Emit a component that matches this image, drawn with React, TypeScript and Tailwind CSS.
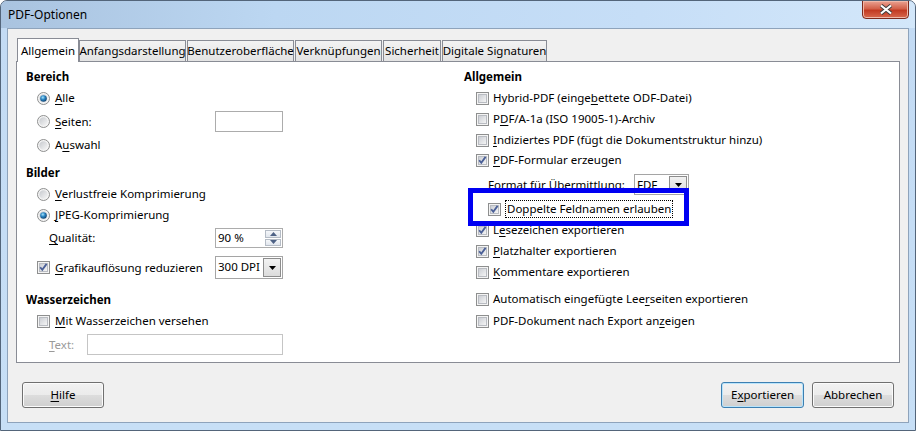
import React from "react";

function Check({ checked }: { checked?: boolean }) {
  return (
    <svg width="13" height="13" viewBox="0 0 13 13" className="shrink-0">
      <defs>
        <linearGradient id="cbg" x1="0" y1="0" x2="1" y2="1">
          <stop offset="0" stopColor="#c9ccd2" />
          <stop offset="1" stopColor="#f7f7f7" />
        </linearGradient>
      </defs>
      <rect x="0.5" y="0.5" width="12" height="12" fill="#f4f4f4" stroke="#8e8f8f" />
      <rect x="2.5" y="2.5" width="8" height="8" fill="url(#cbg)" stroke="#b9bcc2" />
      {checked && (
        <path d="M3.2 6.2 L5.3 8.8 L9.6 2.9" stroke="#4a5f97" strokeWidth="1.8" fill="none" />
      )}
    </svg>
  );
}

function Radio({ checked }: { checked?: boolean }) {
  return (
    <svg width="13" height="13" viewBox="0 0 13 13" className="shrink-0">
      <defs>
        <linearGradient id="rbg" x1="0" y1="0" x2="1" y2="1">
          <stop offset="0" stopColor="#c6c9ce" />
          <stop offset="1" stopColor="#f7f7f7" />
        </linearGradient>
        <radialGradient id="rdot" cx="0.4" cy="0.35" r="0.7">
          <stop offset="0" stopColor="#a8e4fb" />
          <stop offset="0.45" stopColor="#2b86c4" />
          <stop offset="1" stopColor="#0d3a66" />
        </radialGradient>
      </defs>
      <circle cx="6.5" cy="6.5" r="6" fill="#f4f4f4" stroke="#8e8f8f" />
      <circle cx="6.5" cy="6.5" r="4.2" fill="url(#rbg)" />
      {checked && <circle cx="6.5" cy="6.5" r="3.3" fill="url(#rdot)" />}
    </svg>
  );
}

function U({ children }: { children: React.ReactNode }) {
  return <span className="underline underline-offset-[2px]">{children}</span>;
}

function Arrow() {
  return (
    <svg width="7" height="4" viewBox="0 0 7 4">
      <path d="M0 0 H7 L3.5 4 Z" fill="#000" />
    </svg>
  );
}

function Combo({ value, w }: { value: string; w: string }) {
  return (
    <div className={`${w} h-full flex border border-[#a5a5a5] bg-white`}>
      <span className="flex-1 pl-[2px] leading-[20px] whitespace-nowrap">{value}</span>
      <span className="w-[18px] m-px flex items-center justify-center border border-[#8d8d8d] bg-[linear-gradient(#f2f2f2,#dcdcdc)]">
        <Arrow />
      </span>
    </div>
  );
}

function Btn({ children, w, primary }: { children: React.ReactNode; w: string; primary?: boolean }) {
  return (
    <div
      className={`${w} h-[26px] flex items-center justify-center rounded-[3px] border ${
        primary
          ? "border-[#3c7fb1] shadow-[inset_0_0_0_1px_#b9e4fb]"
          : "border-[#707070] shadow-[inset_0_0_0_1px_#fbfbfb]"
      } bg-[linear-gradient(#f2f2f2_0%,#ebebeb_50%,#dddddd_50%,#cfcfcf_100%)]`}
    >
      {children}
    </div>
  );
}

const tabs = [
  { label: "Anfangsdarstellung", w: "w-[107px]" },
  { label: "Benutzeroberfläche", w: "w-[107px]" },
  { label: "Verknüpfungen", w: "w-[87px]" },
  { label: "Sicherheit", w: "w-[58px]" },
  { label: "Digitale Signaturen", w: "w-[105px]" },
];

export default function App() {
  return (
    <div className="w-[916px] h-[431px] flex flex-col overflow-hidden rounded-t-[7px] border border-[#53657a] bg-[linear-gradient(180deg,#b4cde8_0px,#c3dbf4_28px,#c7dff6_100%)] font-['Noto_Sans',sans-serif] text-[11.5px] text-black">
      {/* title bar */}
      <div className="h-[27px] flex items-start bg-[linear-gradient(90deg,#a9c3df,#bcd7f2_30%,#c6def7_70%,#d3e7fa)]">
        <span className="pl-[7px] pt-[5px] leading-[18px] text-[12px]">PDF-Optionen</span>
        <div className="ml-auto mr-[6px] -mt-px w-[47px] h-[19px] flex items-center justify-center rounded-b-[4px] border border-[#7d2a1d] bg-[linear-gradient(#eba393,#d3614a_45%,#c23a22_55%,#d8694e)] shadow-[inset_0_0_0_1px_#f0b8a8]">
          <svg width="14" height="11" viewBox="0 0 14 11">
            <path d="M2 1.5 L12 9.5 M12 1.5 L2 9.5" stroke="#3d3d3d" strokeWidth="4" />
            <path d="M2 1.5 L12 9.5 M12 1.5 L2 9.5" stroke="#fff" strokeWidth="2.2" />
          </svg>
        </div>
      </div>

      {/* client */}
      <div className="mx-[6px] mb-[7px] flex-1 flex flex-col border border-[#8ea3bb] bg-[#f0f0f0] px-[8px]">
        {/* tabs */}
        <div className="mt-[9px] h-[23px] flex items-end pl-px relative z-10">
          <div className="w-[62px] h-[24px] -mb-px flex items-center justify-center border border-b-0 border-[#898c95] bg-white">
            Allgemein
          </div>
          {tabs.map((t) => (
            <div
              key={t.label}
              className={`${t.w} h-[21px] mr-px flex items-center justify-center whitespace-nowrap border border-b-0 border-[#898c95] bg-[linear-gradient(#f3f3f3,#e3e3e3)]`}
            >
              {t.label}
            </div>
          ))}
        </div>

        {/* panel */}
        <div className="h-[302px] border border-[#898c95] bg-white flex">
          {/* left column */}
          <div className="w-[447px] pl-[9px] flex flex-col">
            <div className="mt-[5px] h-[20px] flex items-center font-bold">Bereich</div>
            <div className="mt-[1px] h-[20px] flex items-center gap-[5px] pl-[11px]">
              <Radio checked />
              <span><U>A</U>lle</span>
            </div>
            <div className="mt-[3px] h-[21px] flex items-center pl-[11px]">
              <div className="w-[178px] flex items-center gap-[5px]">
                <Radio />
                <span><U>S</U>eiten:</span>
              </div>
              <div className="w-[68px] h-full border border-[#acacac] bg-white" />
            </div>
            <div className="mt-[3px] h-[20px] flex items-center gap-[5px] pl-[11px]">
              <Radio />
              <span>A<U>u</U>swahl</span>
            </div>
            <div className="mt-[8px] h-[20px] flex items-center font-bold">Bilder</div>
            <div className="mt-[1px] h-[20px] flex items-center gap-[5px] pl-[11px]">
              <Radio />
              <span><U>V</U>erlustfreie Komprimierung</span>
            </div>
            <div className="mt-[1px] h-[20px] flex items-center gap-[5px] pl-[11px]">
              <Radio checked />
              <span><U>J</U>PEG-Komprimierung</span>
            </div>
            <div className="mt-[3px] h-[20px] flex items-center pl-[23px]">
              <span className="w-[166px]"><U>Q</U>ualität:</span>
              <div className="w-[68px] h-full flex border border-[#acacac] bg-white">
                <span className="flex-1 pl-[2px] leading-[18px]">90 %</span>
                <div className="w-[16px] my-px mr-px flex flex-col gap-px">
                  <div className="flex-1 flex items-center justify-center border border-[#b5bcc6] bg-[linear-gradient(#f5f7fa,#e1e6ed)]">
                    <svg width="7" height="4" viewBox="0 0 7 4"><path d="M0 4 H7 L3.5 0 Z" fill="#4d6185" /></svg>
                  </div>
                  <div className="flex-1 flex items-center justify-center border border-[#b5bcc6] bg-[linear-gradient(#f5f7fa,#e1e6ed)]">
                    <svg width="7" height="4" viewBox="0 0 7 4"><path d="M0 0 H7 L3.5 4 Z" fill="#4d6185" /></svg>
                  </div>
                </div>
              </div>
            </div>
            <div className="mt-[8px] h-[23px] flex items-center pl-[11px]">
              <div className="w-[178px] flex items-center gap-[5px]">
                <Check checked />
                <span><U>G</U>rafikauflösung reduzieren</span>
              </div>
              <Combo value="300 DPI" w="w-[68px]" />
            </div>
            <div className="mt-[11px] h-[20px] flex items-center font-bold">Wasserzeichen</div>
            <div className="mt-[1px] h-[20px] flex items-center gap-[5px] pl-[11px]">
              <Check />
              <span><U>M</U>it Wasserzeichen versehen</span>
            </div>
            <div className="mt-[3px] h-[21px] flex items-center pl-[23px]">
              <span className="w-[38px] text-[#9a9a9a]"><U>T</U>ext:</span>
              <div className="w-[196px] h-full border border-[#c5c5c5] bg-white" />
            </div>
          </div>

          {/* right column */}
          <div className="relative flex-1 flex flex-col">
            <div className="mt-[5px] h-[20px] flex items-center font-bold">Allgemein</div>
            <div className="mt-[1px] h-[20px] flex items-center gap-[4px] pl-[12px]">
              <Check />
              <span>Hybrid-PDF (einge<U>b</U>ettete ODF-Datei)</span>
            </div>
            <div className="mt-[1px] h-[20px] flex items-center gap-[4px] pl-[12px]">
              <Check />
              <span>P<U>D</U>F/A-1a (ISO 19005-1)-Archiv</span>
            </div>
            <div className="mt-[1px] h-[20px] flex items-center gap-[4px] pl-[12px]">
              <Check />
              <span><U>I</U>ndiziertes PDF (fügt die Dokumentstruktur hinzu)</span>
            </div>
            <div className="h-[20px] flex items-center gap-[4px] pl-[12px]">
              <Check checked />
              <span><U>P</U>DF-Formular erzeugen</span>
            </div>
            <div className="mt-[4px] h-[21px] flex items-center pl-[24px]">
              <span className="w-[146px]">Format für <U>Ü</U>bermittlung:</span>
              <Combo value="FDF" w="w-[55px]" />
            </div>
            <div className="mt-[4px] h-[20px] flex items-center gap-[4px] pl-[24px]">
              <Check checked />
              <span className="px-px border border-dotted border-black leading-[16px]">Doppelte Feldnamen erlauben</span>
            </div>
            <div className="mt-[1px] h-[20px] flex items-center gap-[4px] pl-[12px]">
              <Check checked />
              <span>L<U>e</U>sezeichen exportieren</span>
            </div>
            <div className="mt-[1px] h-[20px] flex items-center gap-[4px] pl-[12px]">
              <Check checked />
              <span><U>P</U>latzhalter exportieren</span>
            </div>
            <div className="mt-[1px] h-[20px] flex items-center gap-[4px] pl-[12px]">
              <Check />
              <span><U>K</U>ommentare exportieren</span>
            </div>
            <div className="mt-[7px] h-[20px] flex items-center gap-[4px] pl-[12px]">
              <Check />
              <span>Automatisch eingefügte Lee<U>r</U>seiten exportieren</span>
            </div>
            <div className="mt-[2px] h-[20px] flex items-center gap-[4px] pl-[12px]">
              <Check />
              <span>PDF-Dokument nach Export an<U>z</U>eigen</span>
            </div>

            {/* annotation highlight */}
            <div className="absolute left-[4px] top-[126px] w-[221px] h-[38px] border-[5px] border-[#0000f2]" />
          </div>
        </div>

        {/* buttons */}
        <div className="mt-[19px] flex items-center px-[6px]">
          <Btn w="w-[82px]">
            <span><U>H</U>ilfe</span>
          </Btn>
          <div className="ml-auto flex gap-[8px]">
            <Btn w="w-[83px]" primary>
              <span>E<U>x</U>portieren</span>
            </Btn>
            <Btn w="w-[82px]">
              <span>Abbrechen</span>
            </Btn>
          </div>
        </div>
      </div>
    </div>
  );
}
